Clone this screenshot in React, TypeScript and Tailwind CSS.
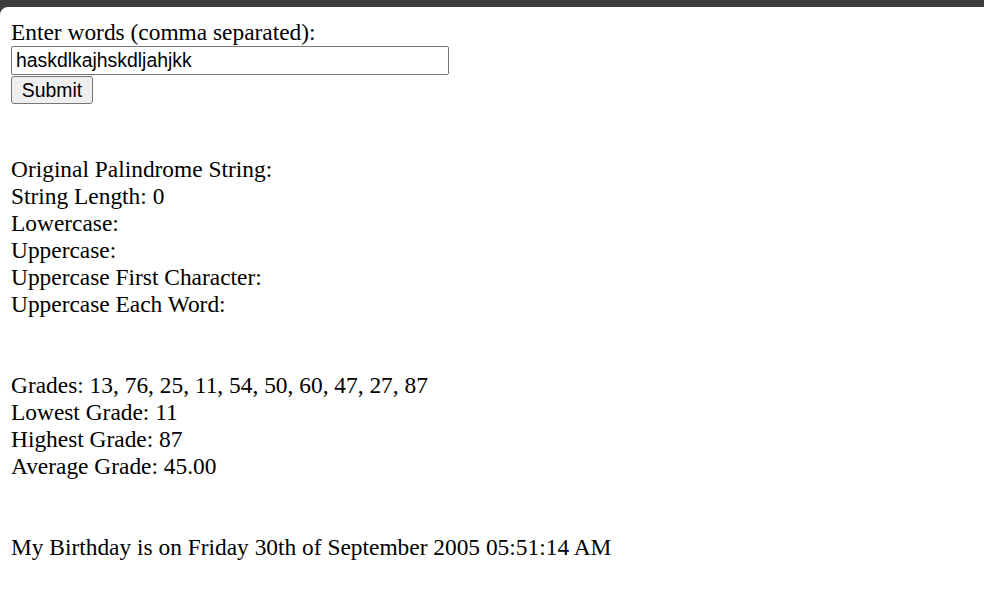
import { useState } from 'react'

// Simple PHP-style results page: form, string info, grades, birthday
const grades = [13, 76, 25, 11, 54, 50, 60, 47, 27, 87]

function Line({ children }: { children?: React.ReactNode }) {
  return <div className="h-[27px] whitespace-pre">{children}</div>
}

export default function App() {
  const [words, setWords] = useState('haskdlkajhskdljahjkk')
  const low = Math.min(...grades)
  const high = Math.max(...grades)
  const avg = grades.reduce((a, b) => a + b, 0) / grades.length

  return (
    <div className="min-h-[602px] bg-[#3c3c3c] pt-[7px]">
      <div className="min-h-[595px] rounded-tl-[8px] bg-white pl-[11px] pt-[12px] font-['Liberation_Serif',serif] text-[23.4px] leading-[27px] text-black">
        <form onSubmit={(e) => e.preventDefault()}>
          <Line>Enter words (comma separated):</Line>
          <input
            value={words}
            onChange={(e) => setWords(e.target.value)}
            className="block h-[29px] w-[438px] rounded-[2px] border border-[#767676] px-[4px] font-['Liberation_Sans',Arial,sans-serif] text-[19.4px] leading-[27px] text-black outline-none"
          />
          <button
            type="submit"
            className="mt-[1px] block h-[28px] w-[82px] rounded-[3px] border border-[#767676] bg-[#efefef] font-['Liberation_Sans',Arial,sans-serif] text-[19.4px] leading-[26px] text-black"
          >
            Submit
          </button>
        </form>

        <div className="mt-[52px]">
          <Line>Original Palindrome String: </Line>
          <Line>String Length: 0</Line>
          <Line>Lowercase: </Line>
          <Line>Uppercase: </Line>
          <Line>Uppercase First Character: </Line>
          <Line>Uppercase Each Word: </Line>
          <Line />
          <Line />
          <Line>Grades: {grades.join(', ')}</Line>
          <Line>Lowest Grade: {low}</Line>
          <Line>Highest Grade: {high}</Line>
          <Line>Average Grade: {avg.toFixed(2)}</Line>
          <Line />
          <Line />
          <Line>My Birthday is on Friday 30th of September 2005 05:51:14 AM</Line>
        </div>
      </div>
    </div>
  )
}
